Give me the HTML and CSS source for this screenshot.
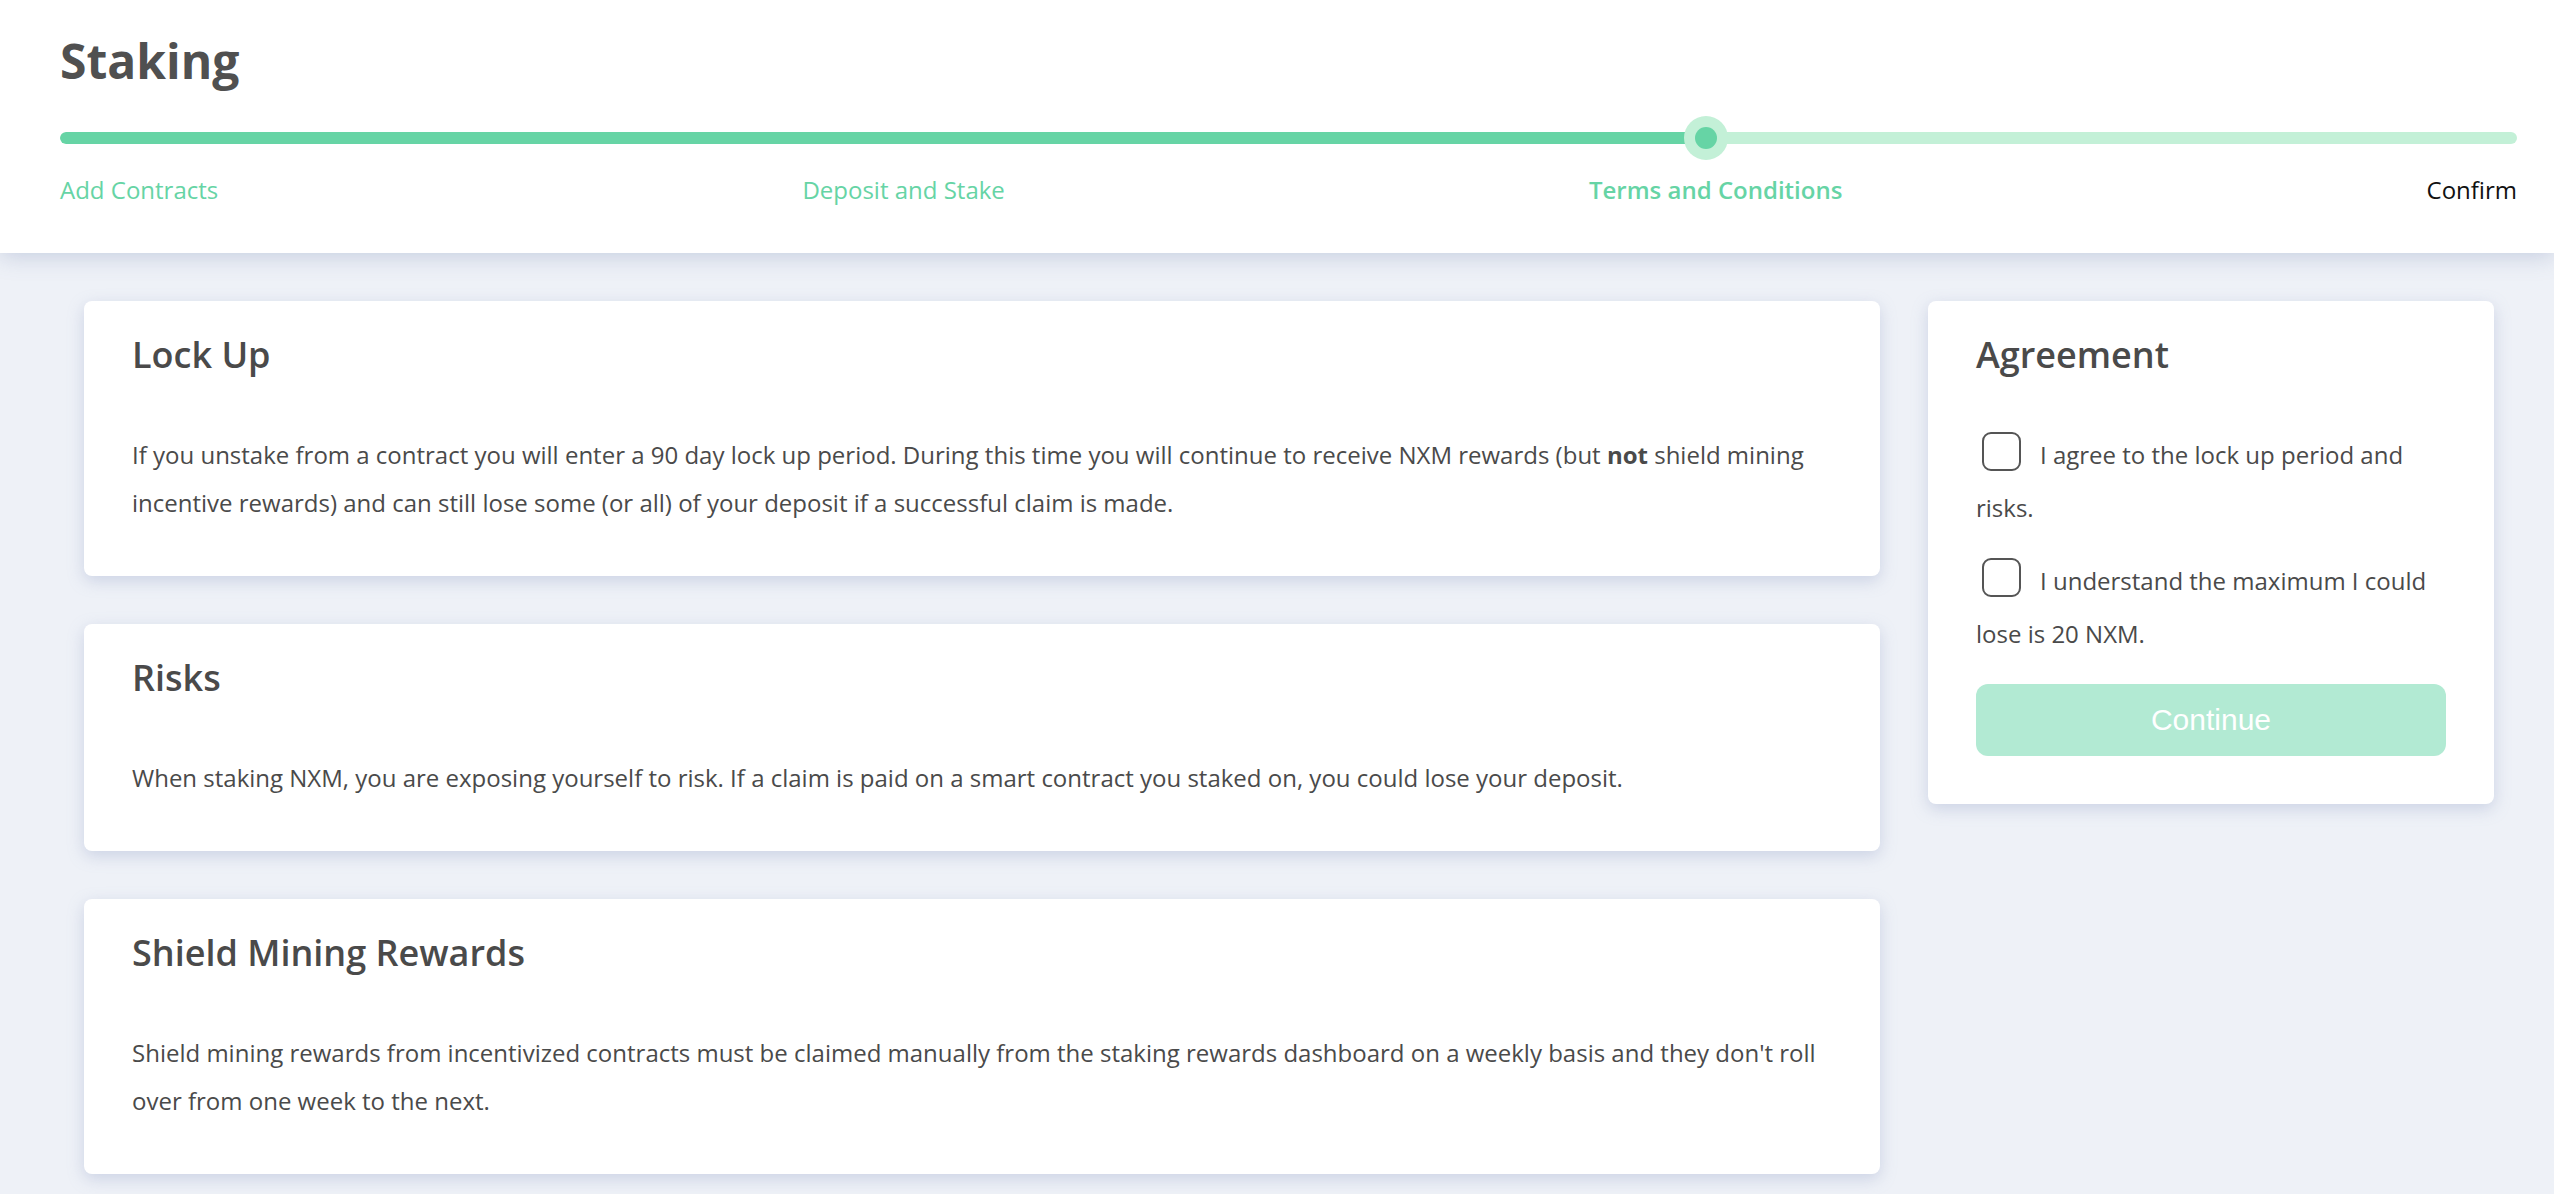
FILE: index.html
```html
<!DOCTYPE html>
<html lang="en">
<head>
<meta charset="utf-8">
<title>Staking</title>
<link rel="stylesheet" href="styles.css">
</head>
<body>
<header class="header">
  <h1 class="title">Staking</h1>
  <div class="progress">
    <div class="track"><div class="fill" style="width: 67%"></div></div>
    <div class="knob" style="left: 67%"><div class="knob-dot"></div></div>
  </div>
  <div class="steps">
    <span class="step done">Add Contracts</span>
    <span class="step done">Deposit and Stake</span>
    <span class="step active">Terms and Conditions</span>
    <span class="step todo">Confirm</span>
  </div>
</header>
<main class="main">
  <div class="col">
    <section class="card">
      <h2 class="card-title">Lock Up</h2>
      <p class="card-text">If you unstake from a contract you will enter a 90 day lock up period. During this time you will continue to receive NXM rewards (but <b>not</b> shield mining incentive rewards) and can still lose some (or all) of your deposit if a successful claim is made.</p>
    </section>
    <section class="card">
      <h2 class="card-title">Risks</h2>
      <p class="card-text">When staking NXM, you are exposing yourself to risk. If a claim is paid on a smart contract you staked on, you could lose your deposit.</p>
    </section>
    <section class="card">
      <h2 class="card-title">Shield Mining Rewards</h2>
      <p class="card-text">Shield mining rewards from incentivized contracts must be claimed manually from the staking rewards dashboard on a weekly basis and they don't roll over from one week to the next.</p>
    </section>
  </div>
  <aside class="card side">
    <h2 class="card-title">Agreement</h2>
    <label class="check"><span class="box"></span>I agree to the lock up period and risks.</label>
    <label class="check second"><span class="box"></span>I understand the maximum I could lose is 20 NXM.</label>
    <button class="btn" type="button">Continue</button>
  </aside>
</main>
</body>
</html>
```

FILE: styles.css
```css
html, body {
  margin: 0;
  padding: 0;
}
body {
  background: #eef1f7;
  font-family: "Open Sans", "Noto Sans", sans-serif;
  color: #4a4a4a;
  min-height: 1194px;
}
.header {
  background: #ffffff;
  padding: 31px 37px 47px 60px;
  box-shadow: 0 3px 22px rgba(90, 110, 160, 0.28);
  position: relative;
  z-index: 1;
}
.title {
  margin: 0;
  font-size: 48px;
  line-height: 60px;
  font-weight: 700;
  color: #505050;
}
.progress {
  position: relative;
  height: 44px;
  margin-top: 25px;
  display: flex;
  align-items: center;
}
.track {
  flex: 1;
  height: 12px;
  border-radius: 6px;
  background: #c3f0d7;
  overflow: hidden;
}
.fill {
  height: 100%;
  background: #66d4a5;
  border-radius: 6px;
}
.knob {
  position: absolute;
  top: 0;
  width: 44px;
  height: 44px;
  margin-left: -22px;
  border-radius: 50%;
  background: #c3f0d7;
  display: flex;
  align-items: center;
  justify-content: center;
}
.knob-dot {
  width: 22px;
  height: 22px;
  border-radius: 50%;
  background: #66d4a5;
}
.steps {
  display: flex;
  justify-content: space-between;
  margin-top: 14px;
  font-size: 24px;
  line-height: 32px;
}
.step.done {
  color: #66d4a5;
}
.step.active {
  color: #66d4a5;
  font-weight: 600;
}
.step.todo {
  color: #111111;
}
.main {
  display: flex;
  align-items: flex-start;
  gap: 48px;
  padding: 48px 60px 48px 84px;
}
.col {
  flex: 1;
  display: flex;
  flex-direction: column;
  gap: 48px;
}
.card {
  background: #ffffff;
  border-radius: 8px;
  box-shadow: 0 5px 16px rgba(140, 155, 195, 0.35);
  padding: 32px 48px 49px;
}
.card-title {
  margin: 0 0 55px;
  font-size: 36px;
  line-height: 43px;
  font-weight: 600;
  color: #4a4a4a;
}
.card-text {
  margin: 0;
  font-size: 24px;
  line-height: 48px;
  color: #4a4a4a;
}
.card-text b {
  font-weight: 700;
}
.side {
  flex: none;
  width: 566px;
  box-sizing: border-box;
  padding-bottom: 48px;
}
.check {
  display: block;
  font-size: 24px;
  line-height: 48px;
  color: #4a4a4a;
}
.check.second {
  margin-top: 25px;
}
.box {
  display: inline-block;
  box-sizing: border-box;
  width: 39px;
  height: 39px;
  border: 2.5px solid #555555;
  border-radius: 9px;
  margin: 0 19px 13px 6px;
  vertical-align: -20px;
}
.btn {
  display: block;
  width: 100%;
  height: 72px;
  margin-top: 26px;
  border: none;
  border-radius: 12px;
  background: #b2ead3;
  color: #ffffff;
  font-family: "Liberation Sans", Arial, sans-serif;
  font-size: 30px;
  padding: 0;
}
```
